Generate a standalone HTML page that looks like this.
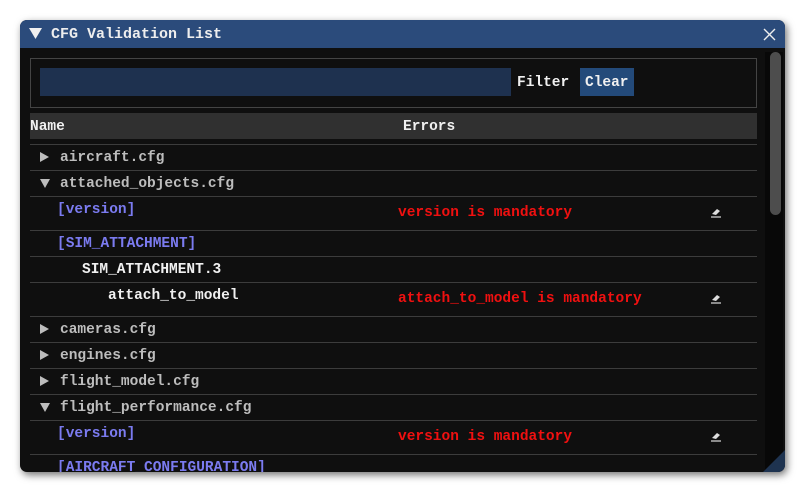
<!DOCTYPE html>
<html><head><meta charset="utf-8"><style>
*{margin:0;padding:0;box-sizing:border-box}
body{width:805px;height:492px;background:#fff;position:relative;overflow:hidden;font-family:"Liberation Mono",monospace;font-size:14.5px;font-weight:bold}
.win{position:absolute;left:20px;top:20px;width:765px;height:452px;background:#0f0f0f;border-radius:7px;overflow:hidden;box-shadow:2px 3px 8px rgba(0,0,0,.55)}
.title{position:absolute;left:0;top:0;width:765px;height:28px;background:#2b4b7b;color:#e8e8e8}
.t{position:absolute;white-space:pre;line-height:18px}
.line{position:absolute;left:10px;width:727px;height:1px;background:#3c3c3c}
.w{color:#f0f0f0}.g{color:#bdbdbd}.b{color:#7b7bf0}.r{color:#f01010}
.ic{position:absolute}
</style></head><body>
<div class="win">
 <div class="title">
  <svg class="ic" style="left:9px;top:8px" width="13" height="12"><polygon points="0,0 13,0 6.5,11" fill="#f0f0f0"/></svg>
  <div class="t" style="left:31px;top:6px;color:#eee;font-size:15px">CFG Validation List</div>
  <svg class="ic" style="left:743px;top:8px" width="13" height="13"><path d="M1 1L12 12M12 1L1 12" stroke="#eee" stroke-width="1.4"/></svg>
 </div>
 <div style="position:absolute;left:745px;top:32px;width:18px;height:418px;background:#080808"></div>
 <div style="position:absolute;left:750px;top:32px;width:11px;height:163px;background:#4d4d4d;border-radius:6px"></div>
 <div style="position:absolute;left:10px;top:38px;width:727px;height:50px;border:1px solid #444"></div>
 <div style="position:absolute;left:20px;top:48px;width:471px;height:28px;background:#1e314f"></div>
 <div class="t w" style="left:497px;top:54px">Filter</div>
 <div style="position:absolute;left:560px;top:48px;width:54px;height:28px;background:#234a7a"></div>
 <div class="t w" style="left:565px;top:54px">Clear</div>
 <div style="position:absolute;left:10px;top:93px;width:727px;height:26px;background:#303030"></div>
 <div class="t w" style="left:10px;top:98px">Name</div>
 <div class="t w" style="left:383px;top:98px">Errors</div>
 <div class="line" style="top:124px"></div>
 <div class="line" style="top:150px"></div>
 <div class="line" style="top:176px"></div>
 <div class="line" style="top:210px"></div>
 <div class="line" style="top:236px"></div>
 <div class="line" style="top:262px"></div>
 <div class="line" style="top:296px"></div>
 <div class="line" style="top:322px"></div>
 <div class="line" style="top:348px"></div>
 <div class="line" style="top:374px"></div>
 <div class="line" style="top:400px"></div>
 <div class="line" style="top:434px"></div>

 <svg class="ic" style="left:20px;top:132px" width="9" height="10"><polygon points="0,0 9,5 0,10" fill="#bdbdbd"/></svg>
 <div class="t g" style="left:40px;top:129px">aircraft.cfg</div>
 <svg class="ic" style="left:20px;top:159px" width="10" height="9"><polygon points="0,0 10,0 5,9" fill="#bdbdbd"/></svg>
 <div class="t g" style="left:40px;top:155px">attached_objects.cfg</div>
 <div class="t b" style="left:37px;top:181px">[version]</div>
 <div class="t r" style="left:378px;top:184px">version is mandatory</div>
 <div class="t b" style="left:37px;top:215px">[SIM_ATTACHMENT]</div>
 <div class="t w" style="left:62px;top:241px">SIM_ATTACHMENT.3</div>
 <div class="t w" style="left:88px;top:267px">attach_to_model</div>
 <div class="t r" style="left:378px;top:270px">attach_to_model is mandatory</div>
 <svg class="ic" style="left:20px;top:304px" width="9" height="10"><polygon points="0,0 9,5 0,10" fill="#bdbdbd"/></svg>
 <div class="t g" style="left:40px;top:301px">cameras.cfg</div>
 <svg class="ic" style="left:20px;top:330px" width="9" height="10"><polygon points="0,0 9,5 0,10" fill="#bdbdbd"/></svg>
 <div class="t g" style="left:40px;top:327px">engines.cfg</div>
 <svg class="ic" style="left:20px;top:356px" width="9" height="10"><polygon points="0,0 9,5 0,10" fill="#bdbdbd"/></svg>
 <div class="t g" style="left:40px;top:353px">flight_model.cfg</div>
 <svg class="ic" style="left:20px;top:383px" width="10" height="9"><polygon points="0,0 10,0 5,9" fill="#bdbdbd"/></svg>
 <div class="t g" style="left:40px;top:379px">flight_performance.cfg</div>
 <div class="t b" style="left:37px;top:405px">[version]</div>
 <div class="t r" style="left:378px;top:408px">version is mandatory</div>
 <div class="t b" style="left:37px;top:439px">[AIRCRAFT_CONFIGURATION]</div>

 <svg class="ic" style="left:690px;top:186px" width="12" height="12"><path d="M2 8L7 3L10 5L6 9Z" fill="#ddd"/><path d="M1 11H11" stroke="#ddd" stroke-width="1.2"/></svg>
 <svg class="ic" style="left:690px;top:272px" width="12" height="12"><path d="M2 8L7 3L10 5L6 9Z" fill="#ddd"/><path d="M1 11H11" stroke="#ddd" stroke-width="1.2"/></svg>
 <svg class="ic" style="left:690px;top:410px" width="12" height="12"><path d="M2 8L7 3L10 5L6 9Z" fill="#ddd"/><path d="M1 11H11" stroke="#ddd" stroke-width="1.2"/></svg>
 <svg class="ic" style="left:743px;top:430px" width="22" height="22"><polygon points="22,0 22,22 0,22" fill="#1e3350"/></svg>
</div>
</body></html>
